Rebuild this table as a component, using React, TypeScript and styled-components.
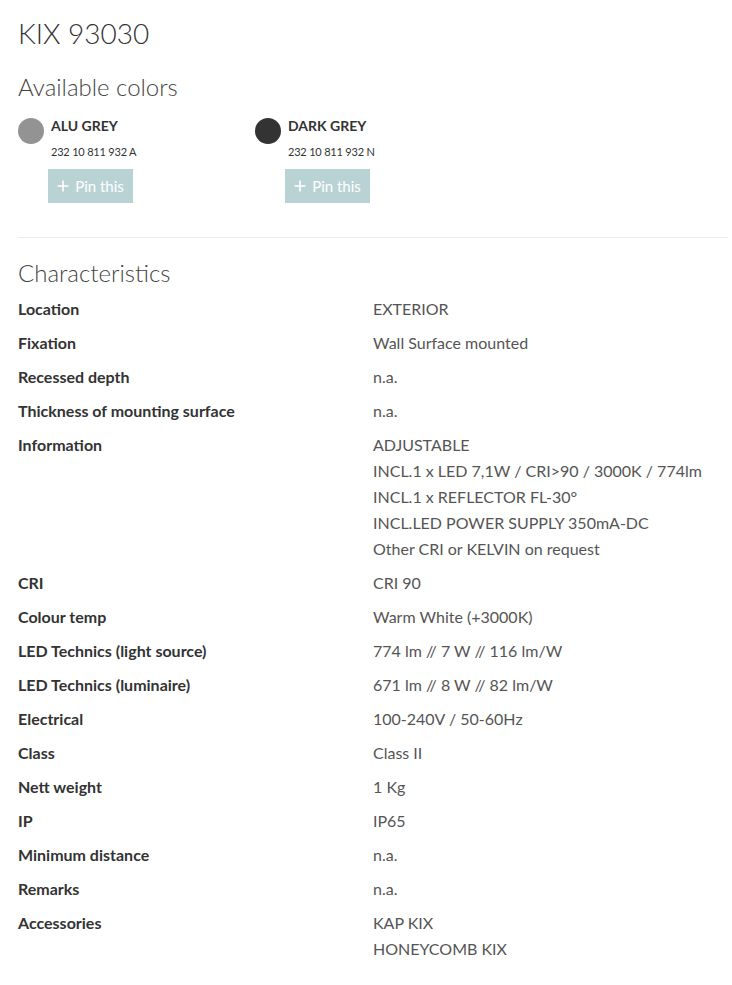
import React from "react";
import styled, { createGlobalStyle } from "styled-components";

const Global = createGlobalStyle`
  html, body { margin: 0; padding: 0; background: #fff; }
  body { font-family: Lato, "Noto Sans", sans-serif; color: #333; }
`;

const Page = styled.div`
  padding: 16px 4px 20px 18px;
`;

const Title = styled.h1`
  margin: 0;
  font-size: 28px;
  line-height: 34px;
  font-weight: 300;
  color: #333;
`;

const SectionTitle = styled.h2<{ $top: number }>`
  margin: ${(p) => p.$top}px 0 0 0;
  font-size: 24px;
  line-height: 28px;
  font-weight: 300;
  color: #444;
`;

const Swatches = styled.div`
  display: flex;
  margin-top: 16px;
`;

const Swatch = styled.div`
  width: 237px;
  display: flex;
  gap: 7px;
`;

const Dot = styled.div<{ $color: string }>`
  width: 26px;
  height: 26px;
  margin-top: 1px;
  border-radius: 50%;
  background: ${(p) => p.$color};
  flex-shrink: 0;
`;

const SwatchInfo = styled.div`
  display: flex;
  flex-direction: column;
`;

const SwatchName = styled.div`
  font-size: 14px;
  line-height: 18px;
  font-weight: 700;
  color: #333;
`;

const SwatchCode = styled.div`
  font-size: 11px;
  line-height: 14px;
  color: #333;
  margin-top: 10px;
  letter-spacing: -0.2px;
`;

const PinButton = styled.button`
  margin-top: 10px;
  margin-left: -3px;
  width: 85px;
  height: 34px;
  border: none;
  background: #b9d3d5;
  color: #fff;
  font-family: Lato, "Noto Sans", sans-serif;
  font-size: 15px;
  display: flex;
  align-items: center;
  justify-content: center;
  gap: 6px;
  padding: 0;
  cursor: pointer;
`;

const Divider = styled.hr`
  border: none;
  border-top: 1px solid #eaeaea;
  margin: 34px 0 0 0;
`;

const Table = styled.div`
  margin-top: 5px;
  display: flex;
  flex-direction: column;
`;

const Row = styled.div`
  display: grid;
  grid-template-columns: 355px 1fr;
  padding: 4px 0;
  font-size: 16px;
  line-height: 26px;
`;

const Label = styled.div`
  font-weight: 700;
  color: #333;
`;

const Value = styled.div`
  color: #555;
`;

const rows: [string, string[]][] = [
  ["Location", ["EXTERIOR"]],
  ["Fixation", ["Wall Surface mounted"]],
  ["Recessed depth", ["n.a."]],
  ["Thickness of mounting surface", ["n.a."]],
  [
    "Information",
    [
      "ADJUSTABLE",
      "INCL.1 x LED 7,1W / CRI>90 / 3000K / 774lm",
      "INCL.1 x REFLECTOR FL-30°",
      "INCL.LED POWER SUPPLY 350mA-DC",
      "Other CRI or KELVIN on request",
    ],
  ],
  ["CRI", ["CRI 90"]],
  ["Colour temp", ["Warm White (+3000K)"]],
  ["LED Technics (light source)", ["774 lm // 7 W // 116 lm/W"]],
  ["LED Technics (luminaire)", ["671 lm // 8 W // 82 lm/W"]],
  ["Electrical", ["100-240V / 50-60Hz"]],
  ["Class", ["Class II"]],
  ["Nett weight", ["1 Kg"]],
  ["IP", ["IP65"]],
  ["Minimum distance", ["n.a."]],
  ["Remarks", ["n.a."]],
  ["Accessories", ["KAP KIX", "HONEYCOMB KIX"]],
];

const colors = [
  { name: "ALU GREY", code: "232 10 811 932 A", color: "#939393" },
  { name: "DARK GREY", code: "232 10 811 932 N", color: "#333333" },
];

const Plus = () => (
  <svg width="12" height="12" viewBox="0 0 12 12">
    <path d="M6 0.5v11M0.5 6h11" stroke="#fff" strokeWidth="1.6" />
  </svg>
);

export default function App() {
  return (
    <Page>
      <Global />
      <Title>KIX 93030</Title>
      <SectionTitle $top={23}>Available colors</SectionTitle>
      <Swatches>
        {colors.map((c) => (
          <Swatch key={c.name}>
            <Dot $color={c.color} />
            <SwatchInfo>
              <SwatchName>{c.name}</SwatchName>
              <SwatchCode>{c.code}</SwatchCode>
              <PinButton>
                <Plus />
                Pin this
              </PinButton>
            </SwatchInfo>
          </Swatch>
        ))}
      </Swatches>
      <Divider />
      <SectionTitle $top={21}>Characteristics</SectionTitle>
      <Table>
        {rows.map(([label, values]) => (
          <Row key={label}>
            <Label>{label}</Label>
            <Value>
              {values.map((v) => (
                <div key={v}>{v}</div>
              ))}
            </Value>
          </Row>
        ))}
      </Table>
    </Page>
  );
}
